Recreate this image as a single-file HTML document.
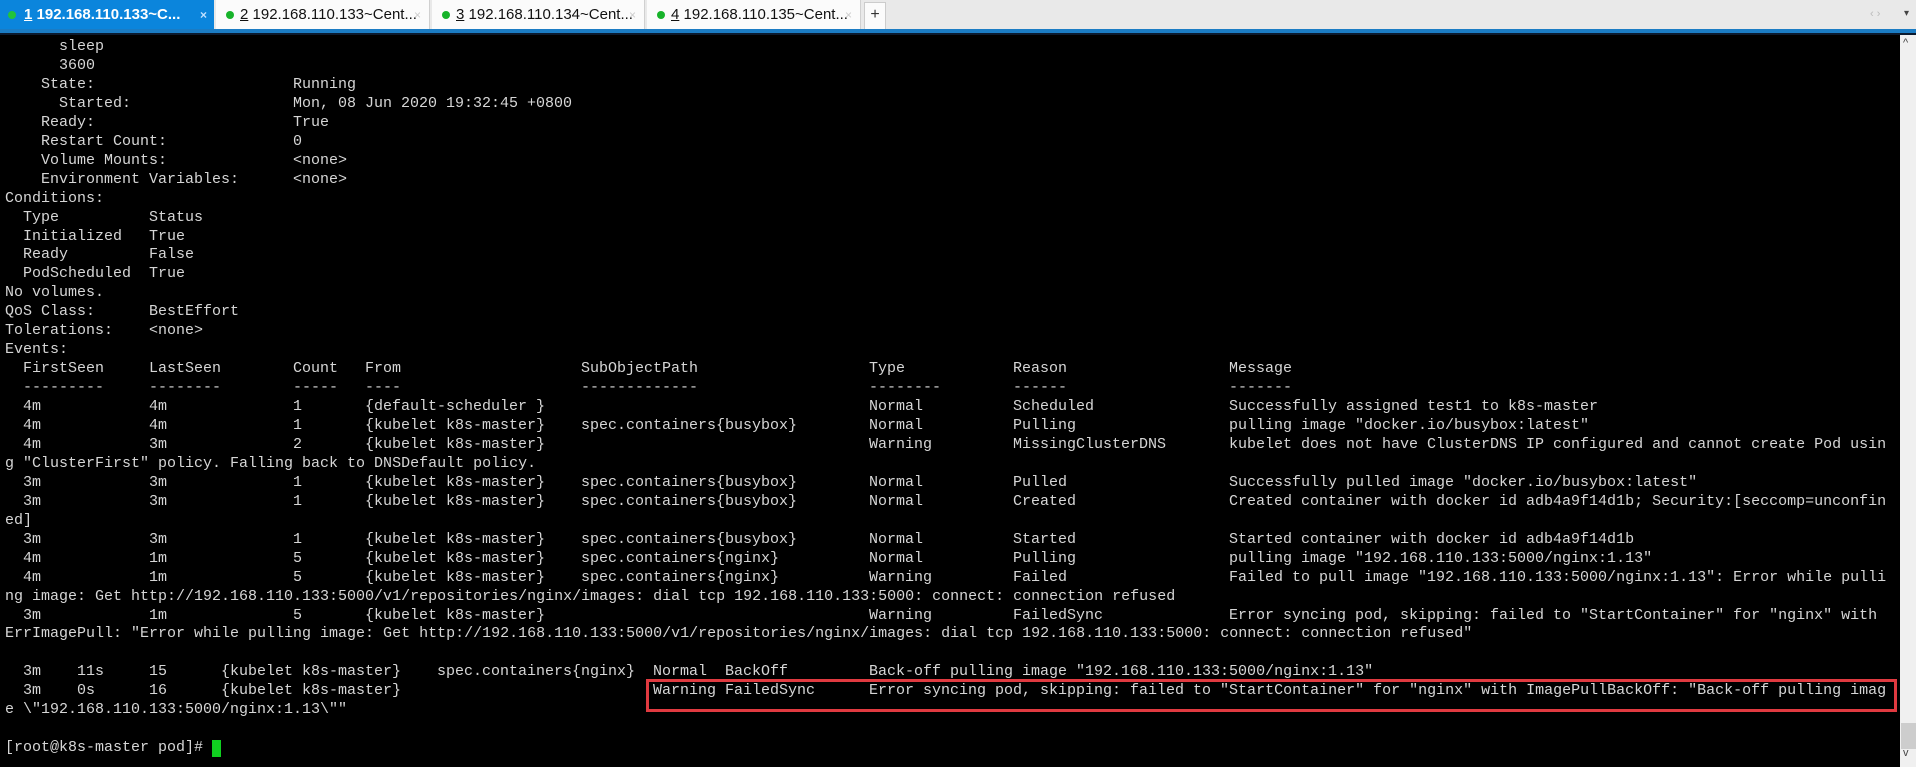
<!DOCTYPE html>
<html><head><meta charset="utf-8">
<style>
html,body{margin:0;padding:0;width:1916px;height:767px;overflow:hidden;background:#000;}
#tabs{position:absolute;left:0;top:0;width:1916px;height:29px;background:#e9e9e9;}
.tab{position:absolute;top:0;height:29px;background:#fbfbfb;border-right:1px solid #d0d0d0;font:15px "Liberation Sans",sans-serif;color:#111;line-height:30px;white-space:nowrap;overflow:hidden;}
.tab .d{position:absolute;top:11px;width:8px;height:8px;border-radius:50%;background:#17b32a;}
.tab .t{position:absolute;}
.tab .x{position:absolute;top:0;color:#ccc;font-size:12px;}
#t1{left:0;width:214px;background:#0b85dc;color:#fff;font-weight:bold;border:none}
#blue{position:absolute;left:0;top:29px;width:1916px;height:4px;background:#1b7cc4;}
#navy{position:absolute;left:0;top:33px;width:1916px;height:2px;background:#0b1a2e;}
#plus{position:absolute;left:864px;top:2px;width:20px;height:26px;background:#fbfbfb;border:1px solid #ccc;font:16px "Liberation Sans",sans-serif;text-align:center;line-height:24px;color:#333;}
#sb{position:absolute;left:1900px;top:35px;width:16px;height:732px;background:#f0f0f0;}
#thumb{position:absolute;left:1901px;top:723px;width:15px;height:26px;background:#cdcdcd;}
.r{position:absolute;left:0;height:19px;width:1900px;}
.r i{position:absolute;top:0;font-style:normal;font:15px/19px "Liberation Mono",monospace;color:#d6d6d6;white-space:pre;}
#box{position:absolute;left:646px;top:679px;width:1245px;height:27px;border:3px solid #e03a40;}
#cur{position:absolute;left:212px;top:740px;width:9px;height:17px;background:#10d020;}
</style></head><body>
<div id="tabs">
 <div class="tab" id="t1"><span class="d" style="left:8px;background:#22c43a"></span><span class="t" style="left:24px"><u>1</u> 192.168.110.133~C...</span><span class="x" style="left:200px;color:#bfe0ff">×</span></div>
 <div class="tab" style="left:216px;width:213px"><span class="d" style="left:10px"></span><span class="t" style="left:24px"><u>2</u> 192.168.110.133~Cent...</span><span class="x" style="left:198px">×</span></div>
 <div class="tab" style="left:432px;width:212px"><span class="d" style="left:10px"></span><span class="t" style="left:24px"><u>3</u> 192.168.110.134~Cent...</span><span class="x" style="left:197px">×</span></div>
 <div class="tab" style="left:647px;width:213px"><span class="d" style="left:10px"></span><span class="t" style="left:24px"><u>4</u> 192.168.110.135~Cent...</span><span class="x" style="left:198px">×</span></div>
 <div id="plus">+</div>
 <div style="position:absolute;left:1870px;top:8px;font:11px sans-serif;color:#bbb">‹ ›</div>
 <div style="position:absolute;left:1904px;top:8px;font:10px sans-serif;color:#444">▾</div>
</div>
<div id="blue"></div><div id="navy"></div>
<div id="sb"><div style="position:absolute;left:3px;top:2px;font:11px sans-serif;color:#444">^</div><div style="position:absolute;left:3px;top:712px;font:11px sans-serif;color:#444">v</div></div>
<div id="thumb"></div>

<div class="r" style="top:37px"><i style="left:59px">sleep</i></div>
<div class="r" style="top:55.95px"><i style="left:59px">3600</i></div>
<div class="r" style="top:74.9px"><i style="left:41px">State:</i><i style="left:293px">Running</i></div>
<div class="r" style="top:93.85px"><i style="left:59px">Started:</i><i style="left:293px">Mon, 08 Jun 2020 19:32:45 +0800</i></div>
<div class="r" style="top:112.8px"><i style="left:41px">Ready:</i><i style="left:293px">True</i></div>
<div class="r" style="top:131.75px"><i style="left:41px">Restart Count:</i><i style="left:293px">0</i></div>
<div class="r" style="top:150.7px"><i style="left:41px">Volume Mounts:</i><i style="left:293px">&lt;none&gt;</i></div>
<div class="r" style="top:169.65px"><i style="left:41px">Environment Variables:</i><i style="left:293px">&lt;none&gt;</i></div>
<div class="r" style="top:188.6px"><i style="left:5px">Conditions:</i></div>
<div class="r" style="top:207.55px"><i style="left:23px">Type</i><i style="left:149px">Status</i></div>
<div class="r" style="top:226.5px"><i style="left:23px">Initialized</i><i style="left:149px">True</i></div>
<div class="r" style="top:245.45px"><i style="left:23px">Ready</i><i style="left:149px">False</i></div>
<div class="r" style="top:264.4px"><i style="left:23px">PodScheduled</i><i style="left:149px">True</i></div>
<div class="r" style="top:283.35px"><i style="left:5px">No volumes.</i></div>
<div class="r" style="top:302.3px"><i style="left:5px">QoS Class:</i><i style="left:149px">BestEffort</i></div>
<div class="r" style="top:321.25px"><i style="left:5px">Tolerations:</i><i style="left:149px">&lt;none&gt;</i></div>
<div class="r" style="top:340.2px"><i style="left:5px">Events:</i></div>
<div class="r" style="top:359.15px"><i style="left:23px">FirstSeen</i><i style="left:149px">LastSeen</i><i style="left:293px">Count</i><i style="left:365px">From</i><i style="left:581px">SubObjectPath</i><i style="left:869px">Type</i><i style="left:1013px">Reason</i><i style="left:1229px">Message</i></div>
<div class="r" style="top:378.1px"><i style="left:23px">---------</i><i style="left:149px">--------</i><i style="left:293px">-----</i><i style="left:365px">----</i><i style="left:581px">-------------</i><i style="left:869px">--------</i><i style="left:1013px">------</i><i style="left:1229px">-------</i></div>
<div class="r" style="top:397.05px"><i style="left:23px">4m</i><i style="left:149px">4m</i><i style="left:293px">1</i><i style="left:365px">{default-scheduler }</i><i style="left:869px">Normal</i><i style="left:1013px">Scheduled</i><i style="left:1229px">Successfully assigned test1 to k8s-master</i></div>
<div class="r" style="top:416px"><i style="left:23px">4m</i><i style="left:149px">4m</i><i style="left:293px">1</i><i style="left:365px">{kubelet k8s-master}</i><i style="left:581px">spec.containers{busybox}</i><i style="left:869px">Normal</i><i style="left:1013px">Pulling</i><i style="left:1229px">pulling image "docker.io/busybox:latest"</i></div>
<div class="r" style="top:434.95px"><i style="left:23px">4m</i><i style="left:149px">3m</i><i style="left:293px">2</i><i style="left:365px">{kubelet k8s-master}</i><i style="left:869px">Warning</i><i style="left:1013px">MissingClusterDNS</i><i style="left:1229px">kubelet does not have ClusterDNS IP configured and cannot create Pod usin</i></div>
<div class="r" style="top:453.9px"><i style="left:5px">g "ClusterFirst" policy. Falling back to DNSDefault policy.</i></div>
<div class="r" style="top:472.85px"><i style="left:23px">3m</i><i style="left:149px">3m</i><i style="left:293px">1</i><i style="left:365px">{kubelet k8s-master}</i><i style="left:581px">spec.containers{busybox}</i><i style="left:869px">Normal</i><i style="left:1013px">Pulled</i><i style="left:1229px">Successfully pulled image "docker.io/busybox:latest"</i></div>
<div class="r" style="top:491.8px"><i style="left:23px">3m</i><i style="left:149px">3m</i><i style="left:293px">1</i><i style="left:365px">{kubelet k8s-master}</i><i style="left:581px">spec.containers{busybox}</i><i style="left:869px">Normal</i><i style="left:1013px">Created</i><i style="left:1229px">Created container with docker id adb4a9f14d1b; Security:[seccomp=unconfin</i></div>
<div class="r" style="top:510.75px"><i style="left:5px">ed]</i></div>
<div class="r" style="top:529.7px"><i style="left:23px">3m</i><i style="left:149px">3m</i><i style="left:293px">1</i><i style="left:365px">{kubelet k8s-master}</i><i style="left:581px">spec.containers{busybox}</i><i style="left:869px">Normal</i><i style="left:1013px">Started</i><i style="left:1229px">Started container with docker id adb4a9f14d1b</i></div>
<div class="r" style="top:548.65px"><i style="left:23px">4m</i><i style="left:149px">1m</i><i style="left:293px">5</i><i style="left:365px">{kubelet k8s-master}</i><i style="left:581px">spec.containers{nginx}</i><i style="left:869px">Normal</i><i style="left:1013px">Pulling</i><i style="left:1229px">pulling image "192.168.110.133:5000/nginx:1.13"</i></div>
<div class="r" style="top:567.6px"><i style="left:23px">4m</i><i style="left:149px">1m</i><i style="left:293px">5</i><i style="left:365px">{kubelet k8s-master}</i><i style="left:581px">spec.containers{nginx}</i><i style="left:869px">Warning</i><i style="left:1013px">Failed</i><i style="left:1229px">Failed to pull image "192.168.110.133:5000/nginx:1.13": Error while pulli</i></div>
<div class="r" style="top:586.55px"><i style="left:5px">ng image: Get http://192.168.110.133:5000/v1/repositories/nginx/images: dial tcp 192.168.110.133:5000: connect: connection refused</i></div>
<div class="r" style="top:605.5px"><i style="left:23px">3m</i><i style="left:149px">1m</i><i style="left:293px">5</i><i style="left:365px">{kubelet k8s-master}</i><i style="left:869px">Warning</i><i style="left:1013px">FailedSync</i><i style="left:1229px">Error syncing pod, skipping: failed to "StartContainer" for "nginx" with</i></div>
<div class="r" style="top:624.45px"><i style="left:5px">ErrImagePull: "Error while pulling image: Get http://192.168.110.133:5000/v1/repositories/nginx/images: dial tcp 192.168.110.133:5000: connect: connection refused"</i></div>
<div class="r" style="top:662.35px"><i style="left:23px">3m</i><i style="left:77px">11s</i><i style="left:149px">15</i><i style="left:221px">{kubelet k8s-master}</i><i style="left:437px">spec.containers{nginx}</i><i style="left:653px">Normal</i><i style="left:725px">BackOff</i><i style="left:869px">Back-off pulling image "192.168.110.133:5000/nginx:1.13"</i></div>
<div class="r" style="top:681.3px"><i style="left:23px">3m</i><i style="left:77px">0s</i><i style="left:149px">16</i><i style="left:221px">{kubelet k8s-master}</i><i style="left:653px">Warning</i><i style="left:725px">FailedSync</i><i style="left:869px">Error syncing pod, skipping: failed to "StartContainer" for "nginx" with ImagePullBackOff: "Back-off pulling imag</i></div>
<div class="r" style="top:700.25px"><i style="left:5px">e \"192.168.110.133:5000/nginx:1.13\""</i></div>
<div class="r" style="top:738.15px"><i style="left:5px">[root@k8s-master pod]#</i></div>
<div id="box"></div>
<div id="cur"></div>
</body></html>
